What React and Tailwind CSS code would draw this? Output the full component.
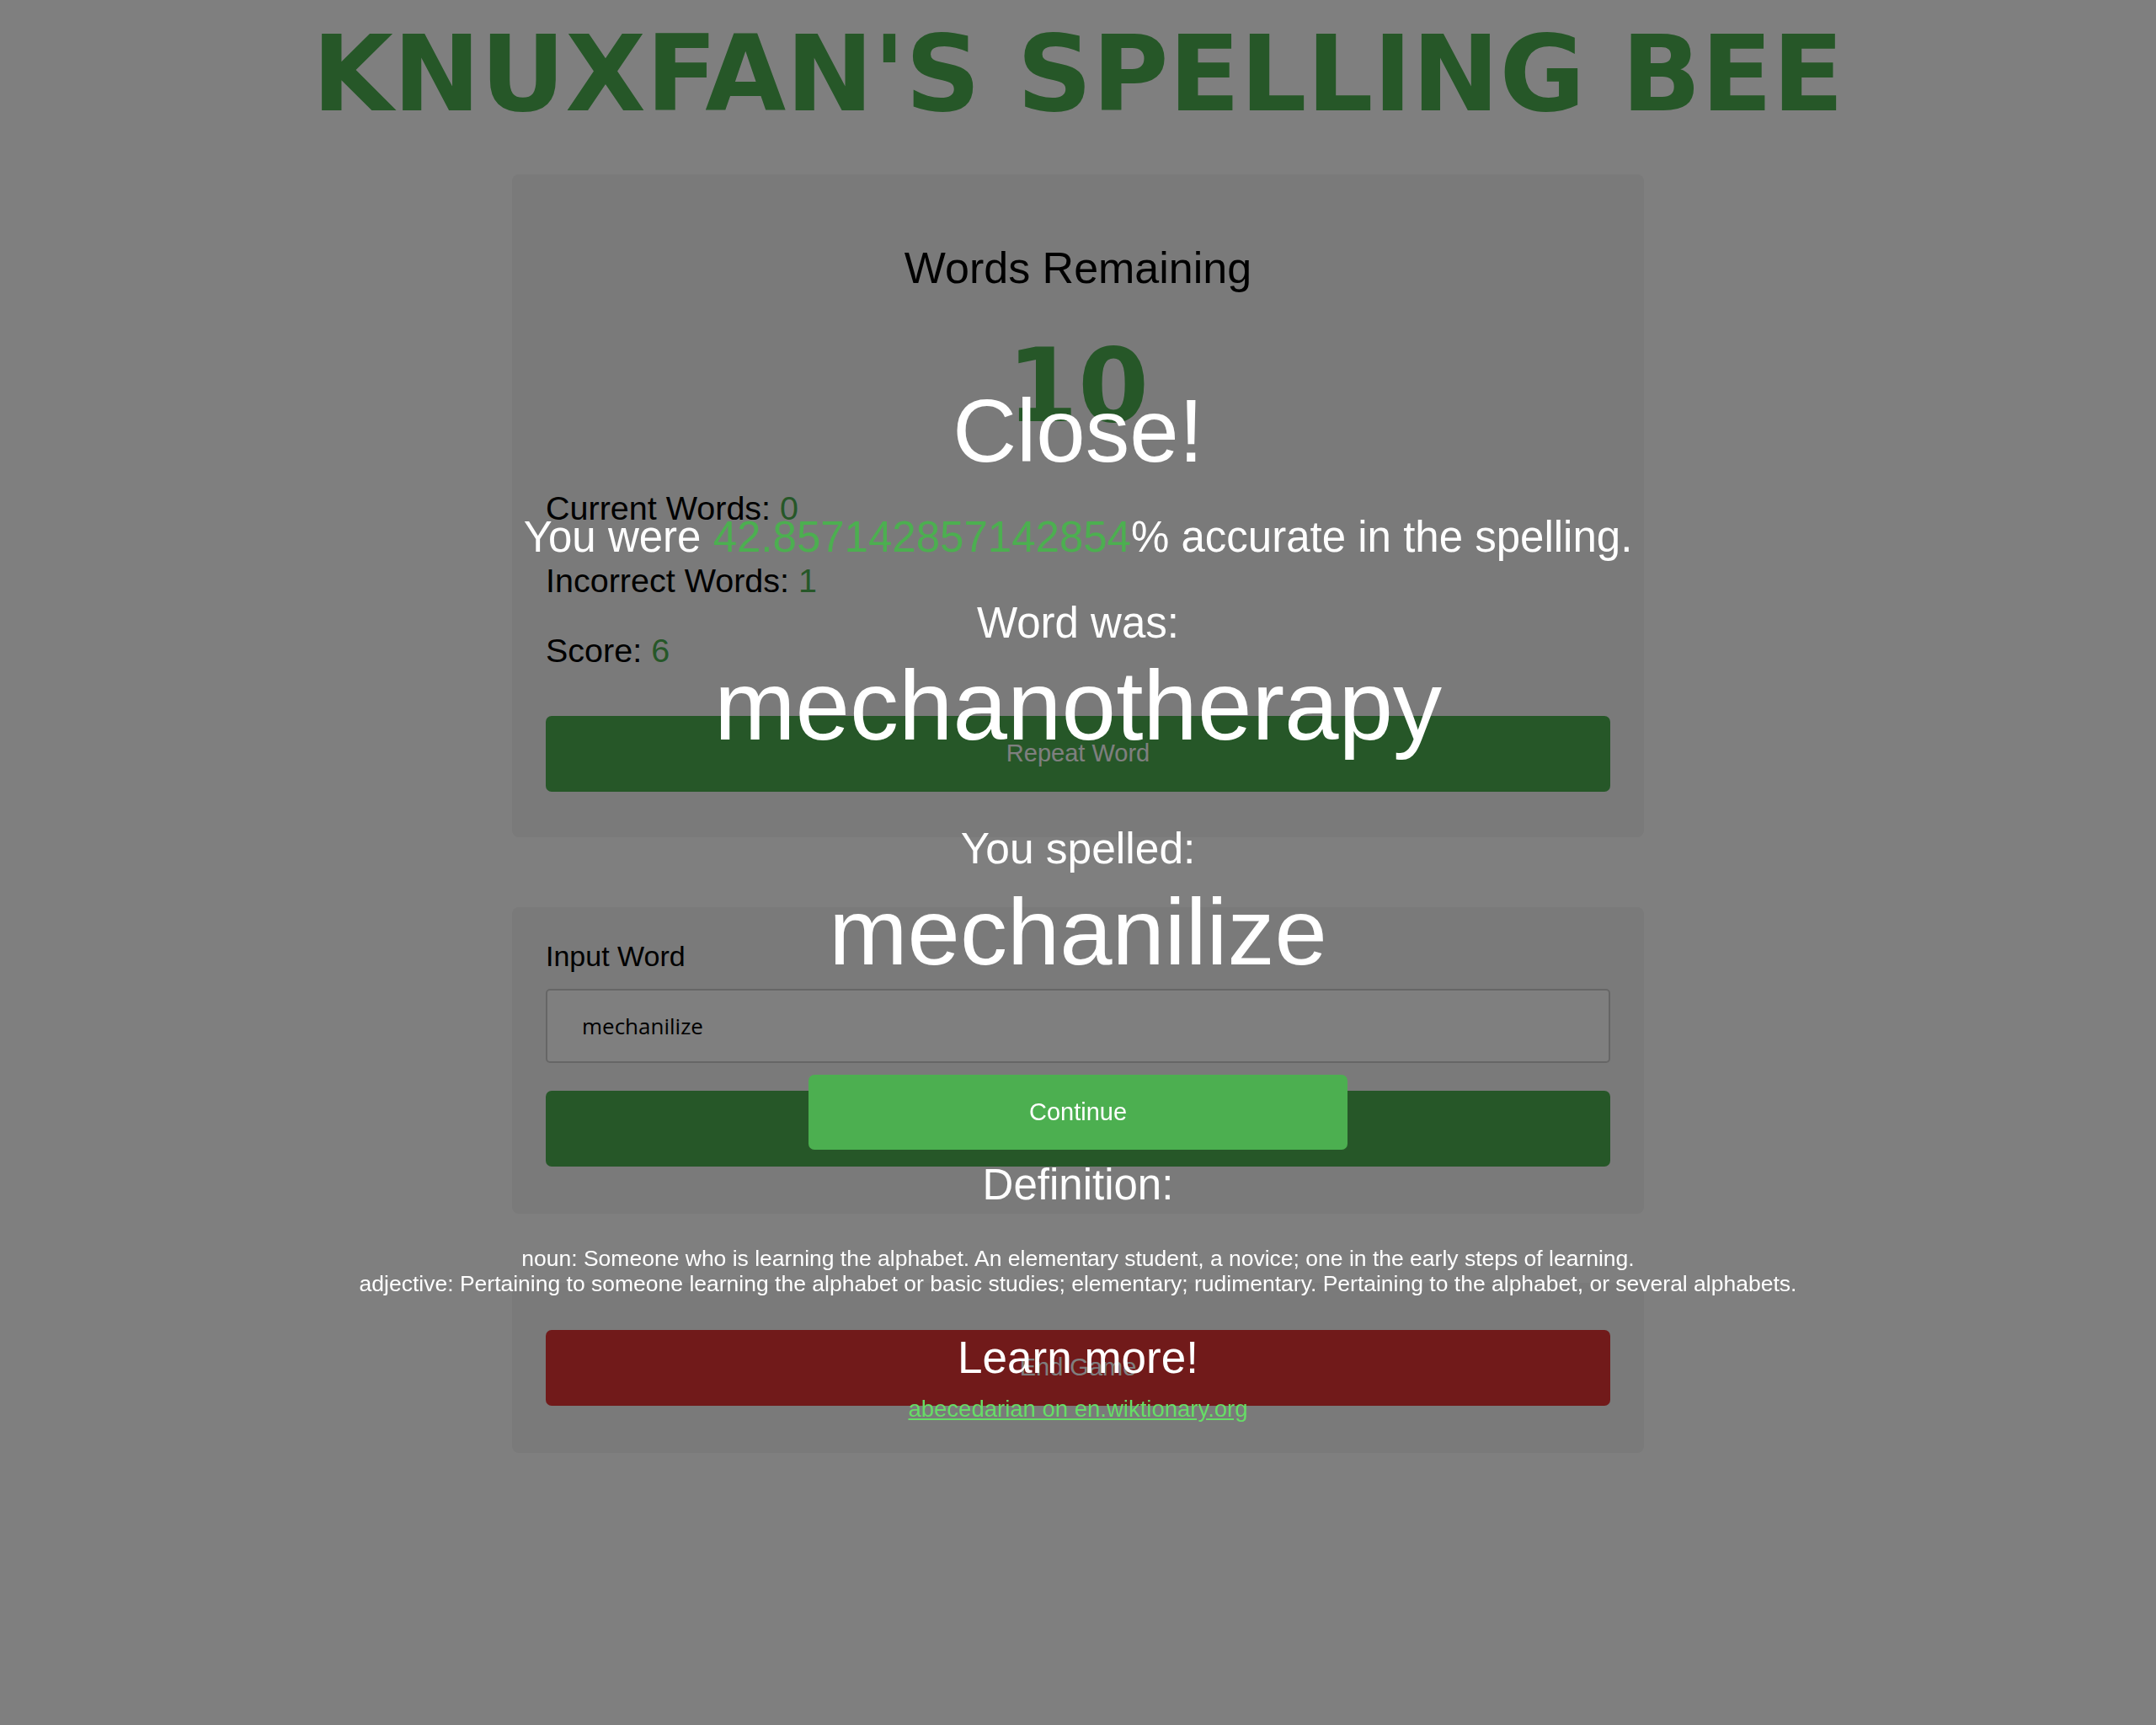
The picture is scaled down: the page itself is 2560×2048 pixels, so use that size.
import React from "react";

const stats = [
  { label: "Current Words:", value: "0", mt: "mt-[65px]" },
  { label: "Incorrect Words:", value: "1", mt: "mt-[46px]" },
  { label: "Score:", value: "6", mt: "mt-[44px]" },
];

const GameButton = ({ children, className }) => (
  <button className={`flex h-[90px] w-full items-center justify-center rounded-[7px] text-[29px] leading-none text-white ${className}`}>
    {children}
  </button>
);

const ResultModal = () => (
  <div className="fixed inset-0 bg-black/50">
    <div className="flex flex-col items-center pt-[459px] text-center text-white">
      <div className="text-[105px] leading-none">Close!</div>
      <div className="mt-[48px] text-[51px] leading-none">
        You were <span className="text-[#4CAF50]">42.857142857142854</span>% accurate in the spelling.
      </div>
      <div className="mt-[51px] text-[51px] leading-none">Word was:</div>
      <div className="mt-[15px] text-[116px] leading-none">mechanotherapy</div>
      <div className="mt-[86px] text-[51.5px] leading-none">You spelled:</div>
      <div className="mt-[17px] text-[112px] leading-none">mechanilize</div>
      <button className="mt-[113px] flex h-[89px] w-[640px] items-center justify-center rounded-[7px] bg-[#4CAF50] text-[29px] leading-none text-white">
        Continue
      </button>
      <div className="mt-[16px] text-[51px] leading-none">Definition:</div>
      <div className="mt-[47px] text-[26.5px] leading-[30px]">
        <div>noun: Someone who is learning the alphabet. An elementary student, a novice; one in the early steps of learning.</div>
        <div>adjective: Pertaining to someone learning the alphabet or basic studies; elementary; rudimentary. Pertaining to the alphabet, or several alphabets.</div>
      </div>
      <div className="mt-[46px] text-[53px] leading-none">Learn more!</div>
      <a href="#" className="mt-[21px] text-[27.5px] leading-none text-[#66dd66] underline">
        abecedarian on en.wiktionary.org
      </a>
    </div>
  </div>
);

export default function App() {
  return (
    <div className="min-h-screen bg-white font-['Liberation_Sans',sans-serif] text-black">
      <h1 className="pt-[26px] text-center font-['DejaVu_Sans',sans-serif] text-[124px] font-bold leading-none text-[#4CAF50]">
        KNUXFAN'S SPELLING BEE
      </h1>

      <div className="mx-auto mt-[57px] w-[1344px]">
        <div className="rounded-[8px] bg-[#f4f4f4] px-[40px] pt-[85px] pb-[54px]">
          <div className="text-center text-[52px] leading-none">Words Remaining</div>
          <div className="mt-[54px] text-center font-['DejaVu_Sans',sans-serif] text-[121px] font-bold leading-none text-[#4CAF50]">10</div>
          {stats.map(s => (
            <div key={s.label} className={`${s.mt} text-[39.5px] leading-none`}>
              {s.label} <span className="text-[#4CAF50]">{s.value}</span>
            </div>
          ))}
          <GameButton className="mt-[57px] bg-[#4CAF50]">Repeat Word</GameButton>
        </div>

        <div className="mt-[83px] rounded-[8px] bg-[#f4f4f4] px-[40px] pt-[41px] pb-[56px]">
          <div className="text-[34px] leading-none">Input Word</div>
          <input
            readOnly
            value="mechanilize"
            className="mt-[22px] h-[88px] w-full rounded-[5px] border-2 border-[#cccccc] bg-white px-[41px] font-['Open_Sans',sans-serif] text-[26px] text-black outline-none"
          />
          <GameButton className="mt-[33px] bg-[#4CAF50]">Submit</GameButton>
        </div>

        <div className="mt-[82px] rounded-[8px] bg-[#f4f4f4] px-[40px] pt-[56px] pb-[56px]">
          <GameButton className="bg-[#e23434]">End Game</GameButton>
        </div>
      </div>

      <ResultModal />
    </div>
  );
}
